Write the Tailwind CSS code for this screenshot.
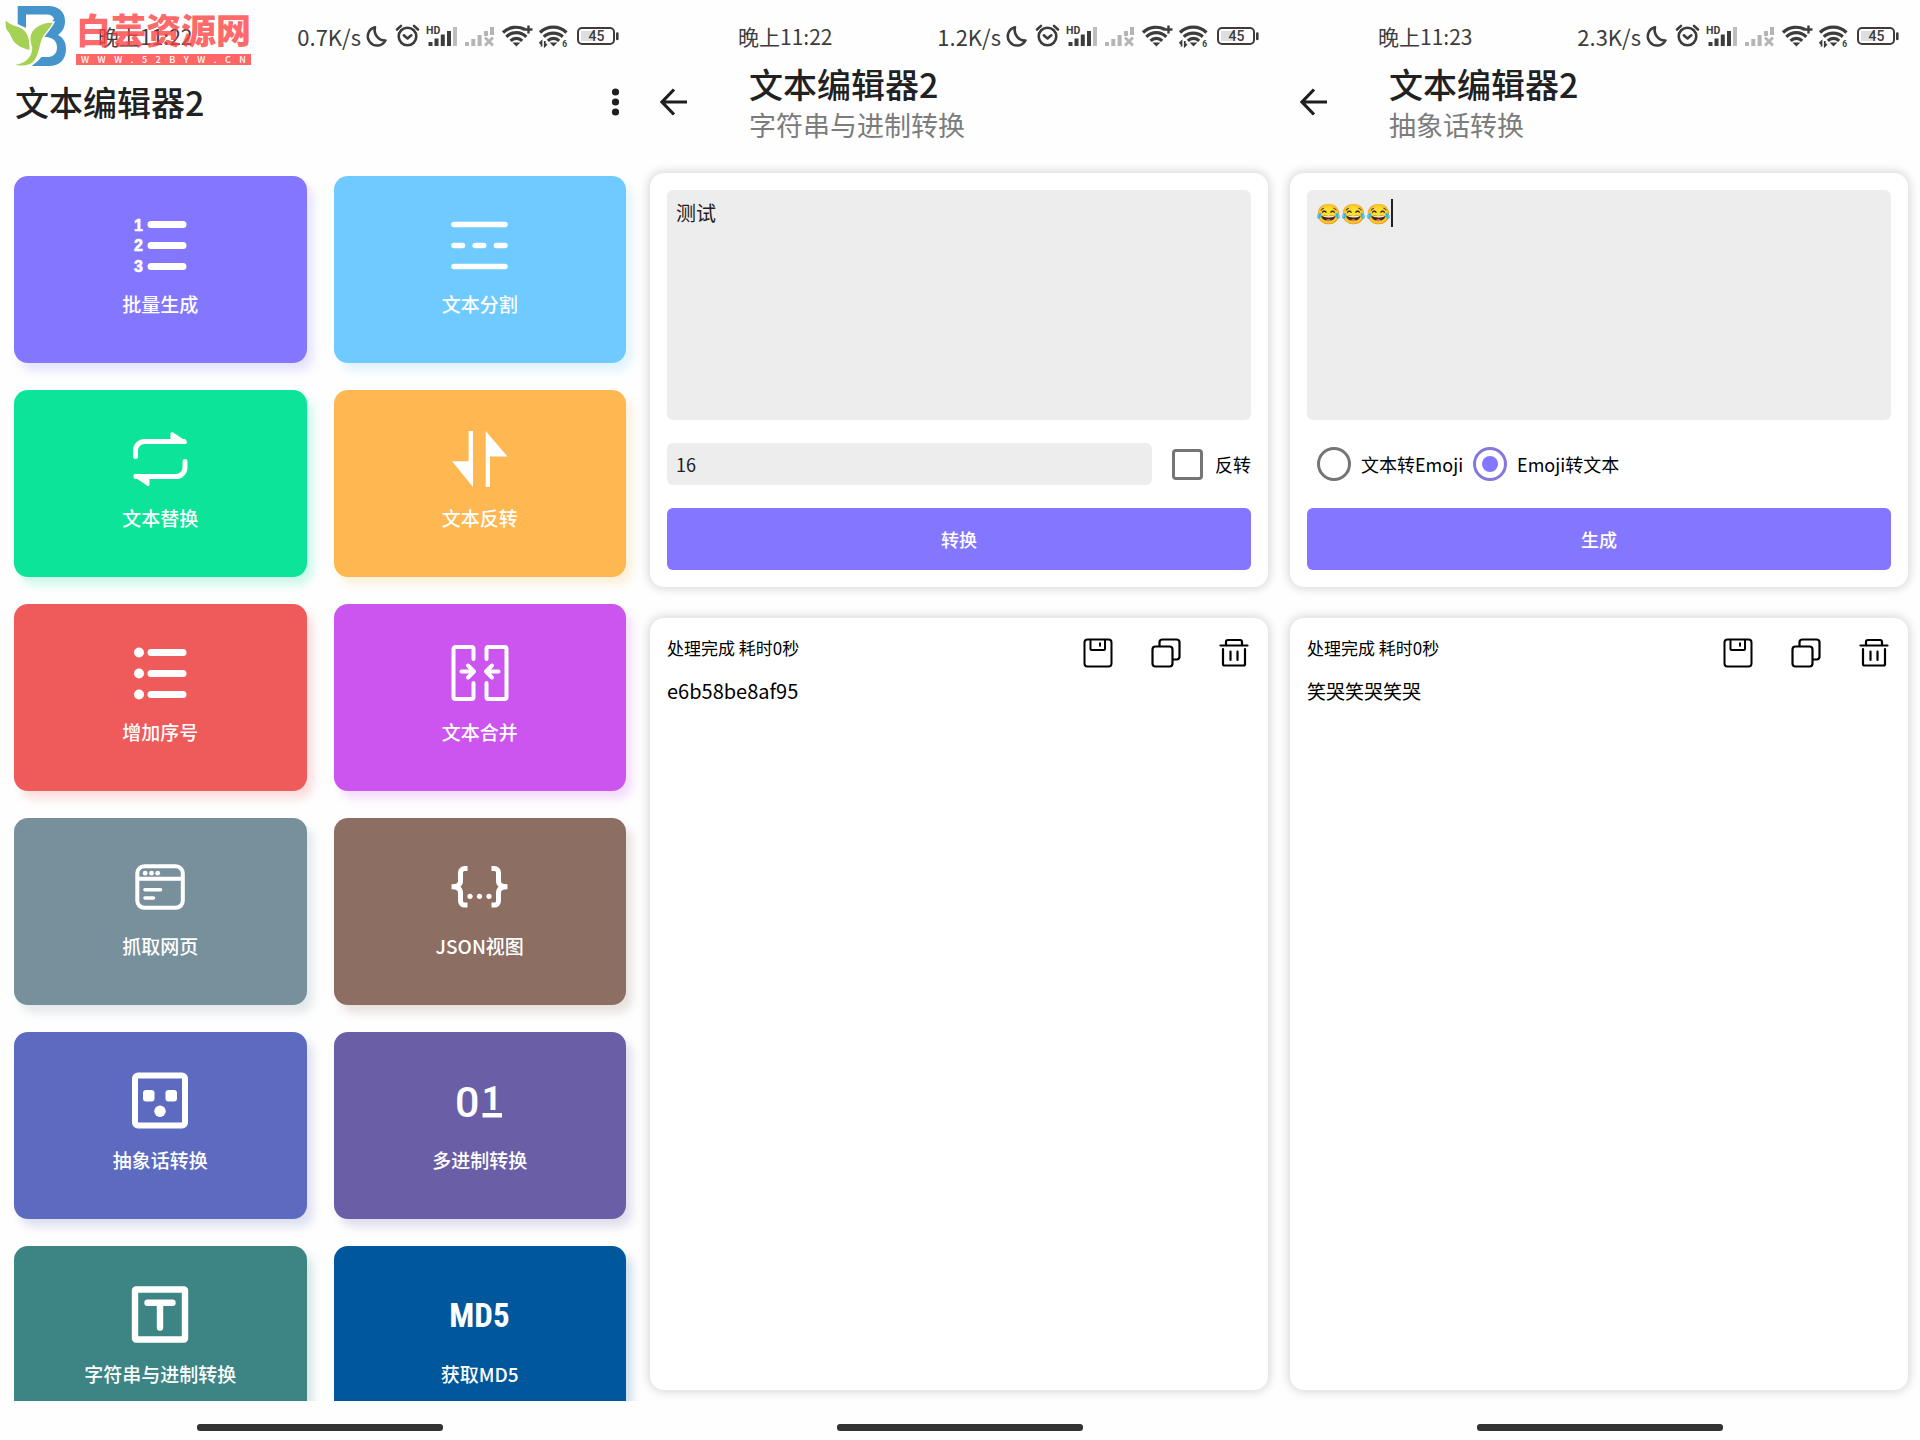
<!DOCTYPE html>
<html lang="zh-CN">
<head>
<meta charset="utf-8">
<meta name="viewport" content="width=device-width, initial-scale=1">
<title>文本编辑器2</title>
<script src="https://cdn.jsdelivr.net/npm/@tailwindcss/browser@4"></script>
</head>
<body class="bg-[#fefefe] text-[#212121] font-['Noto_Sans_CJK_SC',sans-serif]">

<svg class="hidden" aria-hidden="true">
  <!-- Status bar: moon, alarm, two signals, two wifi, battery -->
  <symbol id="status-icons" viewBox="364 24 258 26">
    <g fill="none" stroke="#3c3c3c" stroke-width="2.600" stroke-linecap="round" stroke-linejoin="round">
      <path d="M376 28.200a9.300 9.300 0 1 0 10.400 13.300a10.600 10.600 0 0 1-10.400-13.300z"/>
      <circle cx="408.500" cy="37.500" r="8.800"/>
      <path d="M404.800 36.300l3.700 3.200 3.800-3.200M398 30.500l4-3.600M419 30.500l-4-3.600"/>
    </g>
    <text x="427" y="34.500" font-size="10.500" font-weight="700" fill="#3c3c3c" font-family="Roboto, sans-serif">HD</text>
    <g stroke="#3c3c3c" stroke-width="4">
      <path d="M431.500 47v-4M437.500 47v-7.500M443.800 47v-11.500M450 47v-15"/>
      <path stroke="#bdbdbd" d="M456 47v-19"/>
      <path stroke="#b5b5b5" d="M468 47v-4M474.300 47v-7M480.600 47v-11M487 37v-5M493 36v-8"/>
    </g>
    <path d="M486 38.500l8 8M494 38.500l-8 8" stroke="#b5b5b5" stroke-width="2.800"/>
    <g fill="none" stroke="#3c3c3c" stroke-width="3.200">
      <path d="M504 33.500a19 19 0 0 1 22-3M507.300 37.800a14 14 0 0 1 20 0M511.600 41.800a8 8 0 0 1 11.600 0"/>
      <path d="M541 33.500a19 19 0 0 1 26.500 0M544.800 37.800a14 14 0 0 1 19 0M548.800 41.800a8 8 0 0 1 11.400 0"/>
      <path d="M529.500 26.500v8M525.500 30.500h8" stroke-width="2.400"/>
      <path d="M542.500 47.500v-5l-2 2M545.800 42v5l2-2" stroke-width="1.800"/>
    </g>
    <path d="M513.500 43.500h7.800l-3.900 4zM550.600 43.500h7.800l-3.900 4z" fill="#3c3c3c"/>
    <text x="563.200" y="47.500" font-size="8.500" font-weight="700" fill="#3c3c3c" font-family="Roboto, sans-serif">6</text>
    <rect x="582" y="32" width="12" height="10" rx="1" fill="#dedede"/>
    <rect x="579" y="29" width="36" height="16" rx="4" fill="none" stroke="#3c3c3c" stroke-width="2"/>
    <path d="M618.300 34.500v5.500" stroke="#3c3c3c" stroke-width="2.600" stroke-linecap="round"/>
    <text x="597.500" y="42.300" text-anchor="middle" font-size="14" font-weight="500" fill="#3c3c3c" font-family="Roboto, sans-serif">45</text>
  </symbol>
  <symbol id="back" viewBox="0 0 28 28">
    <path d="M27 14H2.500M14 1.500L2 14l12 12.500" fill="none" stroke="#1f1f1f" stroke-width="3.200"/>
  </symbol>
  <symbol id="save" viewBox="0 0 30 30">
    <g fill="none" stroke="#000" stroke-width="2" stroke-linejoin="round">
      <rect x="1.500" y="1.500" width="27" height="27" rx="3"/>
      <path d="M7.500 1.500v9.500a1 1 0 0 0 1 1h12.500a1 1 0 0 0 1-1V1.500M17 4.500v4"/>
    </g>
  </symbol>
  <symbol id="copy" viewBox="0 0 30 30">
    <g fill="none" stroke="#000" stroke-width="2.200" stroke-linejoin="round">
      <rect x="1.500" y="8.500" width="20" height="20" rx="3"/>
      <path d="M8.500 8.500V4.500a3 3 0 0 1 3-3h14a3 3 0 0 1 3 3v14a3 3 0 0 1-3 3h-4"/>
    </g>
  </symbol>
  <symbol id="trash" viewBox="0 0 30 30">
    <g fill="none" stroke="#000" stroke-width="2.200" stroke-linecap="round" stroke-linejoin="round">
      <path d="M1.500 7.500h27M7 7V4a2 2 0 0 1 2-2h12a2 2 0 0 1 2 2v3M4 11v15a1.500 1.500 0 0 0 1.500 1.500h19a1.500 1.500 0 0 0 1.500-1.500V11M11.500 13.500v8.500M18.500 13.500v8.500"/>
    </g>
  </symbol>
</svg>

<div class="grid h-screen grid-cols-3">

  <!-- Home screen -->
  <section class="relative flex min-h-0 min-w-0 flex-col">
    <div class="flex h-[60px] items-center justify-between pt-3 pr-[19px] pl-[98px] text-[#3c3c3c]">
      <span class="text-[21px] leading-6">晚上11:22</span>
      <span class="flex items-center gap-[2px]">
        <span class="text-[22px] leading-6">0.7K/s</span>
        <svg class="h-[26px] w-[258px]"><use href="#status-icons"/></svg>
      </span>
    </div>
    <a href="#" aria-label="白芸资源网" class="absolute top-1 left-1 flex gap-[10px]">
      <svg class="h-16 w-[62px]" viewBox="0 0 62 64">
        <path fill="#4594cc" d="M13.700 2H44C56 2 61 9 61 17C61 24 58 28 54 31C60 34 62 39 62 45C62 56 55 62 45 62H27.500C32 59 35 56 37.500 53H45C51 52 53 48 53 43.500C53 37 49 34 43 33H39L46 20L50 15C49 12 47 10.500 43 10.500H22V24L13.700 20Z"/>
        <path fill="#a5d155" stroke="#fefefe" stroke-width="1.500" d="M1.500 15C6 21 13 21 19 24.500C25 29 27 37 26 47C18 45 11 42 8 36C6 32 5 29 2 26C.500 22 .500 18 1.500 15Z"/>
        <path fill="#a5d155" stroke="#fefefe" stroke-width="1.500" d="M50 18C44 17.500 37 19 32 23C24 29 25 36 27.500 44C27 55 18 59.500 8 60.500C13 63 24 63 29 59C36 53 35 43 39 34C42 28 47 25 50 18Z"/>
      </svg>
      <span class="flex w-[175px] flex-col pt-[5px] text-[#ff4040]/80">
        <span class="text-[35px] leading-10 font-black whitespace-nowrap">白芸资源网</span>
        <span class="mt-[5px] flex h-[11px] items-center justify-between bg-[#ff4040]/80 px-[5px] text-[9px] leading-none font-medium text-white">
          <span>W</span><span>W</span><span>W</span><span>.</span><span>5</span><span>2</span><span>B</span><span>Y</span><span>W</span><span>.</span><span>C</span><span>N</span>
        </span>
      </span>
    </a>
    <header class="flex h-[116px] items-start justify-between pt-[21px] pr-[10px] pl-[15px]">
      <h1 class="text-[34px] leading-[42px] font-medium">文本编辑器2</h1>
      <button type="button" aria-label="更多" class="pt-[6px]">
        <svg class="h-8 w-[28px]" viewBox="0 0 28 32" fill="#1f1f1f"><circle cx="13.500" cy="5" r="3.600"/><circle cx="13.500" cy="15" r="3.600"/><circle cx="13.500" cy="25" r="3.600"/></svg>
      </button>
    </header>
    <nav class="-mt-3 grid min-h-0 flex-1 auto-rows-[187px] grid-cols-2 gap-[27px] overflow-hidden px-[14px] pt-3 text-[19px] leading-7 font-medium text-white">
      <a href="#" class="flex flex-col items-center gap-[18px] rounded-[14px] bg-[#8477ff] pt-10 shadow-[6px_8px_10px_#8477ff33]">
        <svg class="size-14 overflow-visible" viewBox="0 0 56 56" stroke="#fff" stroke-width="7" stroke-linecap="round"><path d="M19 8.500h32M19 29.500h32M19 50.500h32"/><g fill="#fff" stroke="#fff" stroke-width=".6" font-family="Liberation Sans, sans-serif" font-weight="700" font-size="16"><text x="2" y="14.500">1</text><text x="2" y="35">2</text><text x="2" y="56">3</text></g></svg>
        <span>批量生成</span>
      </a>
      <a href="#" class="flex flex-col items-center gap-[18px] rounded-[14px] bg-[#6ecaff] pt-10 shadow-[6px_8px_10px_#6ecaff33]">
        <svg class="size-14 overflow-visible" viewBox="0 0 56 56" stroke="#fff" stroke-width="5.600" stroke-linecap="round"><path d="M2 8.500h51M2 29.500h8.500M23.200 29.500h8.500M44.500 29.500h8.500M2 50.500h51"/></svg>
        <span>文本分割</span>
      </a>
      <a href="#" class="flex flex-col items-center gap-[18px] rounded-[14px] bg-[#0be499] pt-10 shadow-[6px_8px_10px_#0be49933]">
        <svg class="size-14 overflow-visible" viewBox="0 0 56 56" fill="none" stroke="#fff" stroke-width="5" stroke-linecap="round" stroke-linejoin="round"><path d="M3.500 26.500V20.500a9 9 0 0 1 9-9H52M53 31.500V37.500a9 9 0 0 1-9 9H4"/><path fill="#fff" stroke-width="3" d="M40 3.500L53.500 12.500H40zM16 54.500L3 45.500H16z"/></svg>
        <span>文本替换</span>
      </a>
      <a href="#" class="flex flex-col items-center gap-[18px] rounded-[14px] bg-[#ffb751] pt-10 shadow-[6px_8px_10px_#ffb75133]">
        <svg class="size-14 overflow-visible" viewBox="0 0 56 56" fill="#fff"><path d="M16.600 1H21V57L0 31.300H16.600zM33.700 1L55.500 26.500H38V57H33.700z"/></svg>
        <span>文本反转</span>
      </a>
      <a href="#" class="flex flex-col items-center gap-[18px] rounded-[14px] bg-[#ef5a5a] pt-10 shadow-[6px_8px_10px_#ef5a5a33]">
        <svg class="size-14 overflow-visible" viewBox="0 0 56 56" stroke="#fff" stroke-width="7" stroke-linecap="round"><path d="M19 8.500h32M19 29.500h32M19 50.500h32"/><g fill="#fff" stroke="none"><circle cx="7" cy="8.500" r="5"/><circle cx="7" cy="29.500" r="5"/><circle cx="7" cy="50.500" r="5"/></g></svg>
        <span>增加序号</span>
      </a>
      <a href="#" class="flex flex-col items-center gap-[18px] rounded-[14px] bg-[#cc55ef] pt-10 shadow-[6px_8px_10px_#cc55ef33]">
        <svg class="size-14 overflow-visible" viewBox="0 0 56 56" fill="none" stroke="#fff" stroke-width="4" stroke-linecap="round" stroke-linejoin="round"><path d="M21.500 15V5a2 2 0 0 0-2-2H3.500a2 2 0 0 0-2 2V53a2 2 0 0 0 2 2h16a2 2 0 0 0 2-2V39M34.500 15V5a2 2 0 0 1 2-2h16a2 2 0 0 1 2 2V53a2 2 0 0 1-2 2h-16a2 2 0 0 1-2-2V39M9.500 27.500h12M16 21.500l6 6-6 6M46.500 27.500h-12M40 21.500l-6 6 6 6"/></svg>
        <span>文本合并</span>
      </a>
      <a href="#" class="flex flex-col items-center gap-[18px] rounded-[14px] bg-[#78909c] pt-10 shadow-[6px_8px_10px_#78909c33]">
        <svg class="size-14 overflow-visible" viewBox="0 0 56 56" fill="none" stroke="#fff" stroke-width="4" stroke-linecap="round"><rect x="5.300" y="8.300" width="45.500" height="41.500" rx="7"/><path d="M6 20.700h44"/><path stroke-width="3.600" d="M13 31.700h15.500M13 40h8.500"/><g fill="#fff" stroke="none"><circle cx="13.200" cy="15.200" r="2.400"/><circle cx="19.500" cy="15.200" r="2.400"/><circle cx="25.700" cy="15.200" r="2.400"/></g></svg>
        <span>抓取网页</span>
      </a>
      <a href="#" class="flex flex-col items-center gap-[18px] rounded-[14px] bg-[#8d6e63] pt-10 shadow-[6px_8px_10px_#8d6e6333]">
        <svg class="size-14 overflow-visible" viewBox="0 0 56 56" fill="none" stroke="#fff" stroke-width="5"><path d="M15.500 10.500h-3a4 4 0 0 0-4 4v8c0 4-2 6.300-9 6.300c7 0 9 2.300 9 6.300v8a4 4 0 0 0 4 4h3M39.500 10.500h3a4 4 0 0 1 4 4v8c0 4 2 6.300 9 6.300c-7 0-9 2.300-9 6.300v8a4 4 0 0 1-4 4h-3"/><g fill="#fff" stroke="none"><circle cx="18" cy="38.300" r="2.600"/><circle cx="27.500" cy="38.300" r="2.600"/><circle cx="37" cy="38.300" r="2.600"/></g></svg>
        <span>JSON视图</span>
      </a>
      <a href="#" class="flex flex-col items-center gap-[18px] rounded-[14px] bg-[#5c6bc0] pt-10 shadow-[6px_8px_10px_#5c6bc033]">
        <svg class="size-14 overflow-visible" viewBox="0 0 56 56" fill="#fff"><rect x="3" y="3.500" width="50" height="50" rx="3" fill="none" stroke="#fff" stroke-width="6"/><rect x="11" y="18" width="11.500" height="11.500" rx="3"/><rect x="33.500" y="18" width="11.500" height="11.500" rx="3"/><circle cx="28" cy="39.300" r="5.700"/></svg>
        <span>抽象话转换</span>
      </a>
      <a href="#" class="flex flex-col items-center gap-[18px] rounded-[14px] bg-[#6a5fa7] pt-10 shadow-[6px_8px_10px_#6a5fa733]">
        <svg class="size-14 overflow-visible" viewBox="0 0 56 56" fill="#fff" font-family="Roboto, sans-serif"><text x="3" y="44.500" font-size="43" font-weight="500">0</text><text x="30" y="37.500" font-size="34" font-weight="700">1</text><path d="M30.500 41h19.500v4.500h-19.500z"/></svg>
        <span>多进制转换</span>
      </a>
      <a href="#" class="flex flex-col items-center gap-[18px] rounded-[14px] bg-[#3d8585] pt-10 shadow-[6px_8px_10px_#3d858533]">
        <svg class="size-14 overflow-visible" viewBox="0 0 56 56" fill="none" stroke="#fff" stroke-width="6.400"><rect x="3" y="3.500" width="50" height="50" rx="1" stroke-linejoin="round"/><path stroke-linecap="round" d="M15.500 16.700h25M28 18v23.500"/></svg>
        <span>字符串与进制转换</span>
      </a>
      <a href="#" class="flex flex-col items-center gap-[18px] rounded-[14px] bg-[#01579b] pt-10 shadow-[6px_8px_10px_#01579b33]">
        <svg class="size-14 overflow-visible" viewBox="0 0 56 56" fill="#fff"><text x="27.500" y="41" text-anchor="middle" font-family="Roboto Condensed, Liberation Sans Narrow, sans-serif" font-size="33" font-weight="700">MD5</text></svg>
        <span>获取MD5</span>
      </a>
    </nav>
    <footer class="flex h-[39px] items-end justify-center pb-[9px]"><span class="h-[7px] w-[246px] rounded-[3px] bg-[#333]"></span></footer>
  </section>

  <!-- String / radix conversion -->
  <section class="flex min-h-0 min-w-0 flex-col">
    <div class="flex h-[60px] items-center justify-between pt-3 pr-[19px] pl-[98px] text-[#3c3c3c]">
      <span class="text-[21px] leading-6">晚上11:22</span>
      <span class="flex items-center gap-[2px]">
        <span class="text-[22px] leading-6">1.2K/s</span>
        <svg class="h-[26px] w-[258px]"><use href="#status-icons"/></svg>
      </span>
    </div>
    <header class="flex h-[113px] gap-[61px] pt-[3px] pl-5">
      <button type="button" aria-label="返回" class="h-[77px]"><svg class="size-7"><use href="#back"/></svg></button>
      <div class="flex flex-col gap-[2px]">
        <h1 class="text-[34px] leading-[42px] font-medium">文本编辑器2</h1>
        <p class="text-[27px] leading-9 text-[#7c7c7c]">字符串与进制转换</p>
      </div>
    </header>
    <main class="flex min-h-0 flex-1 flex-col gap-[31px] pr-3 pl-[10px]">
      <form class="flex flex-col rounded-[14px] bg-white px-[17px] pt-[17px] pb-[17px] shadow-[0_0_10px_2px_#00000026]">
        <textarea aria-label="输入文本" class="h-[230px] resize-none rounded-md bg-[#ededed] px-[9px] py-[9px] text-[20px] leading-7">测试</textarea>
        <div class="mt-[23px] flex items-center">
          <input type="text" aria-label="进制" value="16" class="h-[42px] min-w-0 flex-1 rounded-md bg-[#ededed] px-[9px] text-[18px]">
          <label class="flex items-center gap-3 pl-5 text-[18px] leading-6 text-black">
            <input type="checkbox" class="size-[31px] appearance-none rounded-[4px] border-[3px] border-[#757575]">反转
          </label>
        </div>
        <button type="button" class="mt-[23px] h-[62px] rounded-md bg-[#8477ff] text-[18px] font-medium text-white">转换</button>
      </form>
      <section class="mb-[11px] flex flex-1 flex-col rounded-[14px] bg-white px-[17px] pt-[18px] text-black shadow-[0_0_10px_2px_#00000026]">
        <div class="flex items-start justify-between pr-[2px]">
          <p class="text-[17px] leading-6">处理完成 耗时0秒</p>
          <div class="flex gap-[38px] pt-[2px]">
            <button type="button" aria-label="保存"><svg class="size-[30px]"><use href="#save"/></svg></button>
            <button type="button" aria-label="复制"><svg class="size-[30px]"><use href="#copy"/></svg></button>
            <button type="button" aria-label="删除"><svg class="size-[30px]"><use href="#trash"/></svg></button>
          </div>
        </div>
        <p class="mt-[9px] text-[20px] leading-7">e6b58be8af95</p>
      </section>
    </main>
    <footer class="flex h-[39px] items-end justify-center pb-[9px]"><span class="h-[7px] w-[246px] rounded-[3px] bg-[#333]"></span></footer>
  </section>

  <!-- Emoji conversion -->
  <section class="flex min-h-0 min-w-0 flex-col">
    <div class="flex h-[60px] items-center justify-between pt-3 pr-[19px] pl-[98px] text-[#3c3c3c]">
      <span class="text-[21px] leading-6">晚上11:23</span>
      <span class="flex items-center gap-[2px]">
        <span class="text-[22px] leading-6">2.3K/s</span>
        <svg class="h-[26px] w-[258px]"><use href="#status-icons"/></svg>
      </span>
    </div>
    <header class="flex h-[113px] gap-[61px] pt-[3px] pl-5">
      <button type="button" aria-label="返回" class="h-[77px]"><svg class="size-7"><use href="#back"/></svg></button>
      <div class="flex flex-col gap-[2px]">
        <h1 class="text-[34px] leading-[42px] font-medium">文本编辑器2</h1>
        <p class="text-[27px] leading-9 text-[#7c7c7c]">抽象话转换</p>
      </div>
    </header>
    <main class="flex min-h-0 flex-1 flex-col gap-[31px] pr-3 pl-[10px]">
      <form class="flex flex-col rounded-[14px] bg-white px-[17px] pt-[17px] pb-[17px] shadow-[0_0_10px_2px_#00000026]">
        <div class="relative flex">
          <textarea aria-label="输入文本" class="h-[230px] w-full resize-none rounded-md bg-[#ededed] px-[9px] py-[9px] text-[20px] leading-7">😂😂😂</textarea>
          <span class="absolute top-[9px] left-[84px] h-7 w-[2px] bg-[#212121]"></span>
        </div>
        <div class="mt-[23px] flex h-[42px] items-center gap-[10px] pl-[10px] text-[18px] leading-6 text-black">
          <label class="flex items-center gap-[10px]"><input type="radio" name="direction" class="size-[34px] appearance-none rounded-full border-[3px] border-[#757575]">文本转Emoji</label>
          <label class="flex items-center gap-[10px]"><input type="radio" name="direction" checked class="size-[34px] appearance-none rounded-full border-[3px] border-[#8477e0] bg-[#8477ff] bg-clip-content p-[6px]">Emoji转文本</label>
        </div>
        <button type="button" class="mt-[23px] h-[62px] rounded-md bg-[#8477ff] text-[18px] font-medium text-white">生成</button>
      </form>
      <section class="mb-[11px] flex flex-1 flex-col rounded-[14px] bg-white px-[17px] pt-[18px] text-black shadow-[0_0_10px_2px_#00000026]">
        <div class="flex items-start justify-between pr-[2px]">
          <p class="text-[17px] leading-6">处理完成 耗时0秒</p>
          <div class="flex gap-[38px] pt-[2px]">
            <button type="button" aria-label="保存"><svg class="size-[30px]"><use href="#save"/></svg></button>
            <button type="button" aria-label="复制"><svg class="size-[30px]"><use href="#copy"/></svg></button>
            <button type="button" aria-label="删除"><svg class="size-[30px]"><use href="#trash"/></svg></button>
          </div>
        </div>
        <p class="mt-[9px] text-[19px] leading-7">笑哭笑哭笑哭</p>
      </section>
    </main>
    <footer class="flex h-[39px] items-end justify-center pb-[9px]"><span class="h-[7px] w-[246px] rounded-[3px] bg-[#333]"></span></footer>
  </section>
</div>
</body>
</html>
